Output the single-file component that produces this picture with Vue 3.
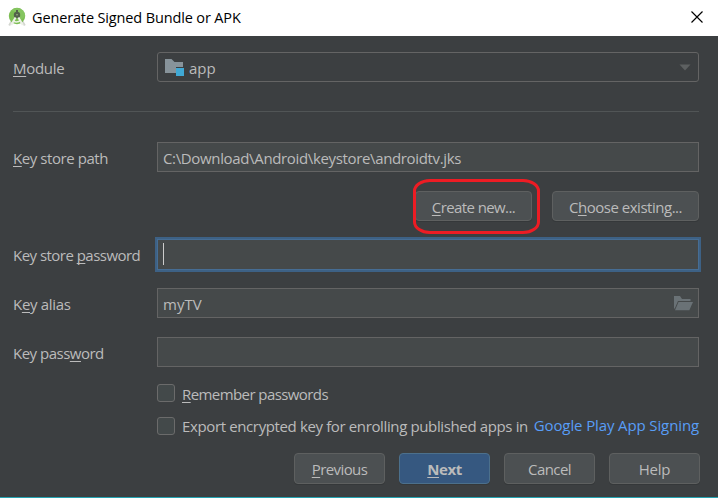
<script setup>
import { ref } from 'vue'

const storePath = ref('C:\\Download\\Android\\keystore\\androidtv.jks')
const alias = ref('myTV')
</script>

<template>
  <main class="dialog">
    <header class="titlebar">
      <svg class="logo" width="18" height="20" viewBox="0 0 18 20">
        <path d="M4.8 12L1.2 18.6M13.2 12l3.6 6.6" stroke="#d3d6d0" stroke-width="2" />
        <circle cx="9" cy="9" r="8.2" fill="#7cbd52" />
        <path d="M3.5 3.2A8.2 8.2 0 0 1 17.2 9L13 13 7 5Z" fill="#8bc968" opacity=".65" />
        <path d="M9 3v3" stroke="#53614b" stroke-width="2" />
        <circle cx="9" cy="8" r="3.2" fill="#53614b" />
        <circle cx="9" cy="7.8" r=".8" fill="#a3c58b" />
        <path d="M7.6 10.4L3.2 18M10.4 10.4l4.4 7.6" stroke="#edf0e8" stroke-width="2" />
        <path d="M4.8 13.6Q9 16.6 12.8 13.2" fill="none" stroke="#edf3e8" stroke-width="1.6" />
      </svg>
      <h1><span class="t-title">Generate Signed Bundle or APK</span></h1>
      <svg class="close" width="12" height="12" viewBox="0 0 12 12">
        <path d="M.5.5l11 11M11.5.5l-11 11" stroke="#000" stroke-width="1.15" />
      </svg>
    </header>

    <form class="form" @submit.prevent>
      <div class="row module-row">
        <label><span class="t-module"><u>M</u>odule</span></label>
        <div class="field select">
          <svg width="20" height="19" viewBox="0 0 20 19">
            <path d="M0 1h6.5l3 3H18v5h-7v6H0z" fill="#87939a" />
            <path d="M11 10h8v8h-8z" fill="#40a9d5" />
          </svg>
          <span class="t-app">app</span>
          <svg class="arrow" width="12" height="7" viewBox="0 0 12 7"><path d="M.5.5h11L6 6.5z" fill="#5d6061" /></svg>
        </div>
      </div>
      <div class="divider"></div>
      <div class="row path-row">
        <label><span class="t-path"><u>K</u>ey store path</span></label>
        <div class="field"><span class="t-file">{{ storePath }}</span></div>
      </div>
      <div class="path-actions">
        <div class="create-wrap">
          <button class="btn create"><span class="t-create"><u>C</u>reate new...</span></button>
          <span class="highlight"></span>
        </div>
        <button class="btn choose"><span class="t-choose">C<u>h</u>oose existing...</span></button>
      </div>
      <div class="row store-pass">
        <label><span class="t-storepass">Key store <u>p</u>assword</span></label>
        <div class="field focused"><span class="caret"></span></div>
      </div>
      <div class="row alias-row">
        <label><span class="t-alias">K<u>e</u>y alias</span></label>
        <div class="field">
          <span class="t-mytv">{{ alias }}</span>
          <svg class="folder" width="20" height="15" viewBox="0 0 20 15">
            <path d="M0 0h6l2 3h8.5v2H4L.8 12.5H0z" fill="#6a7276" />
            <path d="M4.5 6H19l-3.7 8.3H1z" fill="#6a7276" />
          </svg>
        </div>
      </div>
      <div class="row keypass-row">
        <label><span class="t-keypass">Key pass<u>w</u>ord</span></label>
        <div class="field"></div>
      </div>
      <div class="check remember"><i class="box"></i><span class="t-remember"><u>R</u>emember passwords</span></div>
      <div class="check export"><i class="box"></i><span class="t-export">Export encrypted key for enrolling published apps in</span><a><span class="t-link">Google Play App Signing</span></a></div>
    </form>

    <footer>
      <button class="btn"><span class="t-prev"><u>P</u>revious</span></button>
      <button class="btn primary"><span class="t-next"><u>N</u>ext</span></button>
      <button class="btn"><span class="t-cancel">Cancel</span></button>
      <button class="btn"><span class="t-help">Help</span></button>
    </footer>
  </main>
</template>

<style>
body { margin: 0; background: #3c3f41; overflow: hidden; }
</style>

<style scoped>
* { box-sizing: border-box; }
.dialog {
  width: 718px; height: 498px; display: flex; flex-direction: column;
  background: #3c3f41; border-bottom: 1px solid #24a3b1; color: #bbb;
  font: 15px/20px "Open Sans", "Noto Sans", sans-serif; white-space: nowrap;
}
.titlebar { height: 36px; flex: none; display: flex; align-items: center; padding: 0 15px 0 8px; background: #fff; color: #000; }
.logo { margin-right: 6px; margin-top: -2px; }
h1 { margin: 0; font: inherit; font-size: 14.5px; flex: 1; }
.close { margin-top: -2px; }
.form { padding: 16px 19px 0 13px; flex: 1; display: flex; flex-direction: column; }
.row { display: grid; grid-template-columns: 144px 542px; height: 31px; flex: none; align-items: start; }
label { padding-top: 6px; }
u { text-decoration-thickness: 1px; text-underline-offset: 2px; text-decoration-skip-ink: none; }
.field { height: 30px; border: 1px solid #646464; background: #45494a; display: flex; align-items: center; padding: 1px 5px 0; }
.select { background: #3c3f41; border-radius: 3px; padding: 1px 7px 0; }
.select span { margin-left: 4px; padding-top: 1px; }
.arrow { margin-left: auto; }
.divider { height: 1px; background: #515556; margin: 28px 0 30px 0; flex: none; }
.module-row + .divider { margin-right: -1px; width: 690px; max-width: 100%; }
.path-actions { display: flex; justify-content: flex-end; gap: 20px; margin-top: 18px; height: 31px; flex: none; }
.btn { height: 30px; padding: 1px 0 0; border: 1px solid #5e6060; border-radius: 4px; background: #4c5052; color: #bbb; font: inherit; display: flex; align-items: center; justify-content: center; box-shadow: 0 1px 0 #35383a; }
.create-wrap { position: relative; }
.create { width: 117px; }
.choose { width: 147px; }
.highlight { position: absolute; left: -2px; top: -12px; width: 127px; height: 55px; border: 3px solid #ed1c24; border-radius: 17px / 12px; }
.store-pass { margin-top: 17px; }
.focused { height: 31px; border-color: #466d94; box-shadow: 0 0 0 2px #3d6185; }
.caret { width: 1px; height: 22px; background: #ccc; margin-top: -2px; }
.alias-row, .keypass-row { margin-top: 18px; }
.folder { margin: 0 -1px 0 auto; }
.check { height: 18px; display: flex; align-items: center; padding-left: 144px; flex: none; }
.remember { margin-top: 16px; }
.export { margin-top: 15px; }
.box { width: 18px; height: 18px; border: 1px solid #6b6b6b; border-radius: 3px; background: #43494a; margin-right: 7px; flex: none; }
.remember > span { padding-top: 2px; }
.export > span { padding-top: 0; }
a { color: #589df6; margin-left: auto; margin-top: -2px; }
footer { display: grid; grid-template-columns: repeat(4, 91px); gap: 14px; justify-content: end; padding: 0 18px 13px 0; flex: none; }
footer .btn { height: 31px; }
.primary { background: #365880; border-color: #4c708c; font-weight: 700; }
.t-title { letter-spacing: -.14px; }
.t-module { letter-spacing: -.3px; }
.t-alias { letter-spacing: -.3px; }
.t-path { letter-spacing: -.43px; }
.t-storepass { letter-spacing: -.53px; }
.t-keypass { letter-spacing: -.5px; }
.t-file { letter-spacing: -.35px; }
.t-remember { letter-spacing: -.58px; }
.t-export { letter-spacing: -.37px; }
.t-link { letter-spacing: -.12px; }
.t-create { letter-spacing: -.6px; }
.t-choose { letter-spacing: -.48px; }
.t-prev, .t-cancel { letter-spacing: -.6px; }
.t-next { letter-spacing: -.45px; }
.t-help { letter-spacing: -.2px; }
</style>
